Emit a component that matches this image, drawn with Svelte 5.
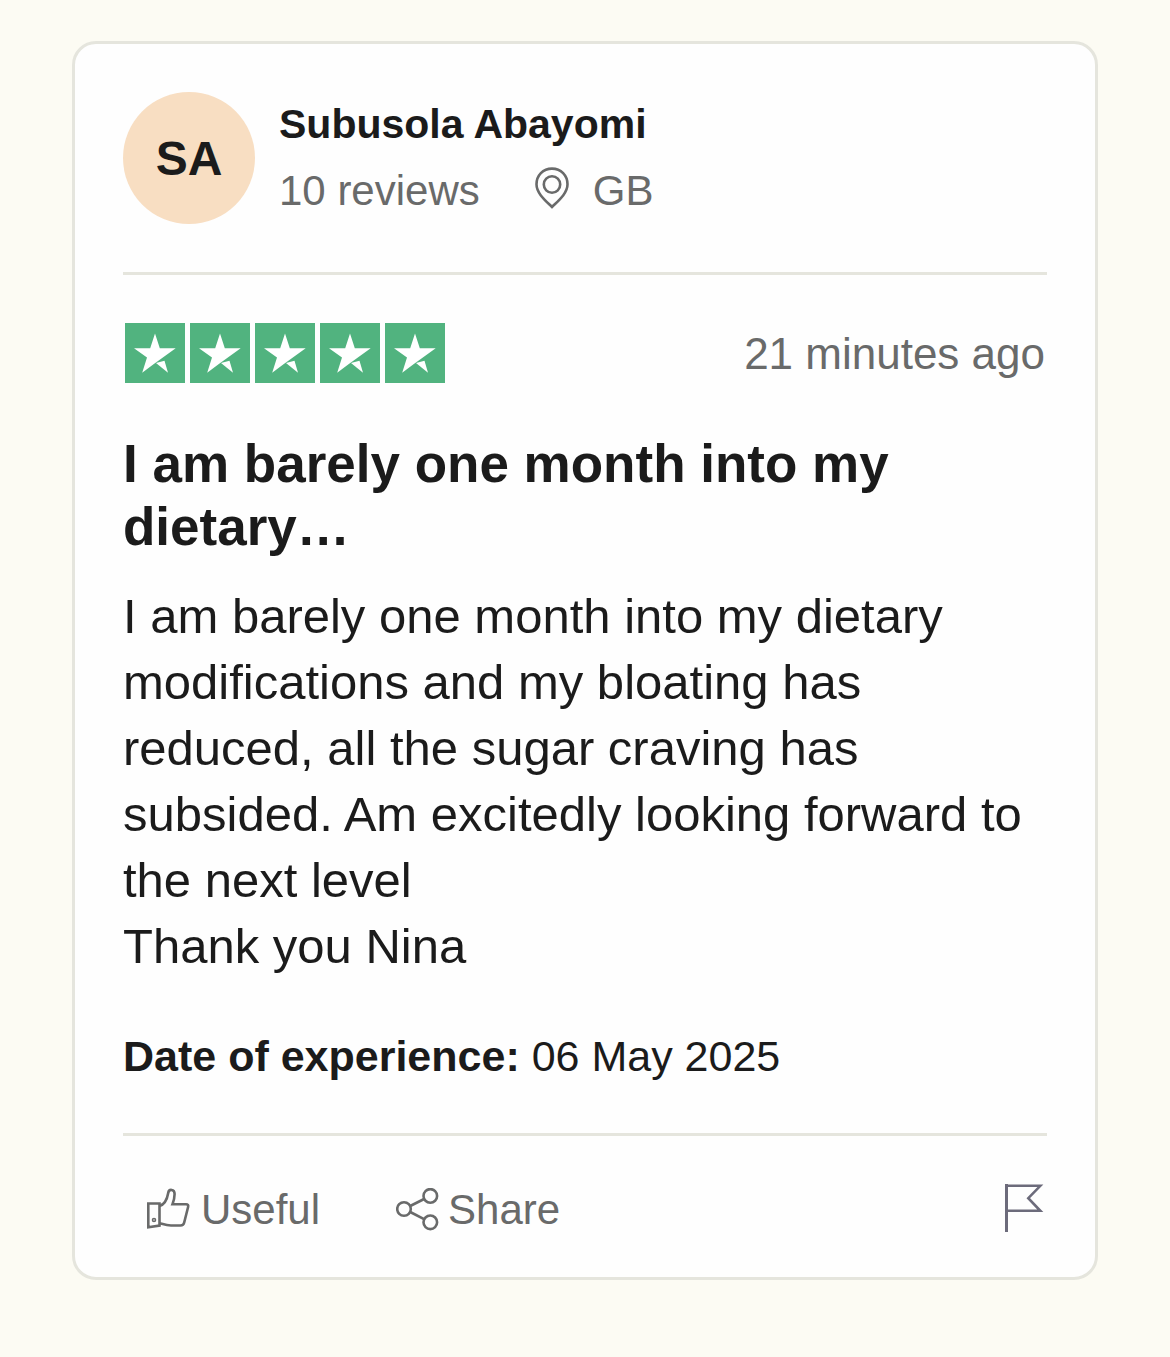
<script lang="ts">
    let { rating = 5 } = $props();

    const review = {
        initials: 'SA',
        name: 'Subusola Abayomi',
        count: '10 reviews',
        country: 'GB',
        posted: '21 minutes ago',
        title: ['I am barely one month into my', 'dietary…'],
        body: [
            'I am barely one month into my dietary',
            'modifications and my bloating has',
            'reduced, all the sugar craving has',
            'subsided. Am excitedly looking forward to',
            'the next level',
            'Thank you Nina',
        ],
        date: '06 May 2025',
    };
</script>

<article class="card">
    <header class="consumer">
        <div class="avatar">{review.initials}</div>
        <div class="details">
            <div class="name">{review.name}</div>
            <div class="meta">
                <span>{review.count}</span>
                <span class="location">
                    <svg width="36" height="42" viewBox="0 0 36 42" fill="none" stroke="currentColor" stroke-width="2.6" aria-hidden="true">
                        <path d="M18 40C12 34 2.5 26.5 2.5 17.3C2.5 8.5 9 1.6 18 1.6S33.5 8.5 33.5 17.3C33.5 26.5 24 34 18 40Z" />
                        <circle cx="18" cy="17.5" r="8.2" />
                    </svg>
                    {review.country}
                </span>
            </div>
        </div>
    </header>

    <section class="content">
        <div class="rating-row">
            <div class="stars" role="img" aria-label="Rated {rating} out of 5 stars">
                {#each Array(rating) as _}
                    <svg width="60" height="60" viewBox="0 0 60 60" aria-hidden="true">
                        <rect width="60" height="60" fill="#51b37f" />
                        <path fill="#fff" d="M30 10.5L34.8 25.3H50.7L28.5 41.3L17.2 49.7L22 34.4L9 25.3H25.2Z" />
                        <path fill="#fff" d="M31 40L39.5 37.8L43 49.7Z" />
                    </svg>
                {/each}
            </div>
            <time class="posted">{review.posted}</time>
        </div>
        <h2>{review.title.join('\n')}</h2>
        <p class="body">{review.body.join('\n')}</p>
        <p class="date"><b>Date of experience:</b> {review.date}</p>
    </section>

    <footer class="actions">
        <button type="button" class="useful">
            <svg width="44" height="44" viewBox="0 0 44 44" fill="none" stroke="currentColor" stroke-width="2.6" aria-hidden="true">
                <path d="M1.3 15.5H12.5V37.6L1.3 39.2Z" />
                <path d="M12.5 18C17.5 16.5 20 12 21.2 5C21.9 0.5 27.6 1 27.6 6C27.6 10 26.5 13.5 25.5 16.2H39C41 16.2 41.5 17.3 41.1 19L37.2 34.5C36.7 36.8 35.7 37.5 33.5 37.5H24C19.5 37.5 16.5 36.3 12.5 35.2" />
                <circle cx="7" cy="32" r="1.5" stroke-width="1.6" />
            </svg>
            Useful
        </button>
        <button type="button" class="share">
            <svg width="44" height="44" viewBox="0 0 44 44" fill="none" stroke="currentColor" stroke-width="2.6" aria-hidden="true">
                <circle cx="8" cy="21" r="6.8" />
                <circle cx="34.3" cy="7.9" r="6.8" />
                <circle cx="34.3" cy="34.3" r="6.8" />
                <path d="M14.2 18L28.1 11M14.2 24L28.1 31.2" />
            </svg>
            Share
        </button>
        <button type="button" class="flag" aria-label="Flag review">
            <svg width="42" height="48" viewBox="0 0 42 48" fill="none" stroke="currentColor" stroke-width="2.6" aria-hidden="true">
                <path d="M1.5 0V48" stroke-width="3" />
                <path d="M1.5 1.8H35.3L23.3 14.2L35.3 26.8H1.5" />
            </svg>
        </button>
    </footer>
</article>

<style>
    :global(body) {
        margin: 0;
        background: #fcfbf3;
    }

    .card {
        margin: 41px 72px 78px;
        padding: 48px 48px 36px;
        border: 3px solid #e5e5dd;
        border-radius: 24px;
        background: #fefefe;
        color: #1b1b1b;
        font-family: "Liberation Sans", Arial, sans-serif;
        font-size: 42px;
        line-height: 63px;
    }

    .consumer {
        display: flex;
        gap: 24px;
        padding-bottom: 48px;
        border-bottom: 3px solid #e5e5dd;
    }

    .avatar {
        display: flex;
        flex: none;
        align-items: center;
        justify-content: center;
        width: 132px;
        height: 132px;
        border-radius: 50%;
        background: #f8dec2;
        font-size: 48px;
        font-weight: bold;
    }

    .details {
        display: flex;
        flex-direction: column;
        gap: 3px;
        padding-top: 1px;
    }

    .name {
        font-size: 41px;
        font-weight: bold;
    }

    .meta {
        display: flex;
        gap: 54px;
        color: #696a6a;
    }

    .location {
        display: flex;
        gap: 23px;
    }

    .location svg {
        margin-top: 8px;
    }

    .content {
        padding: 48px 0 45px;
        border-bottom: 3px solid #e5e5dd;
    }

    .rating-row {
        display: flex;
        align-items: center;
        justify-content: space-between;
        height: 60px;
        padding: 0 2px;
    }

    .stars {
        display: flex;
        gap: 5px;
    }

    .posted {
        color: #696a6a;
        font-size: 44px;
    }

    h2 {
        margin: 49px 0 25px;
        font-size: 53px;
        line-height: 63px;
        white-space: pre-line;
    }

    .body {
        margin: 0 0 46px;
        font-size: 49px;
        line-height: 66px;
        white-space: pre-line;
    }

    .date {
        margin: 0;
        font-size: 43px;
    }

    .actions {
        display: flex;
        align-items: flex-start;
        gap: 76px;
        padding: 42px 0 0 24px;
    }

    button {
        display: flex;
        align-items: center;
        gap: 10px;
        padding: 0;
        border: 0;
        background: none;
        color: #696a6a;
        font: inherit;
        cursor: pointer;
    }

    .share {
        gap: 8px;
    }

    .flag {
        margin-left: auto;
        padding: 6px 0 9px;
        color: #6c6b7b;
    }
</style>
